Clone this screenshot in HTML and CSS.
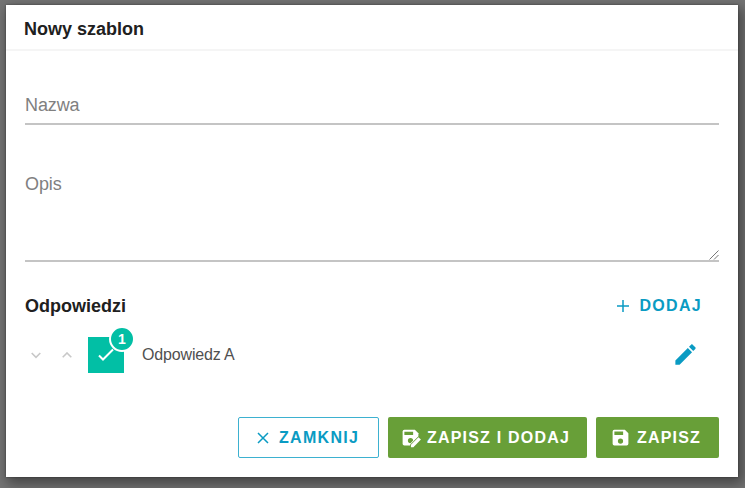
FILE: index.html
```html
<!DOCTYPE html>
<html lang="pl">
  <head>
    <title>Nowy szablon</title>
    <meta charset="utf-8" />
    <link rel="stylesheet" href="styles.css">
  </head>
  <body>
    <div class="dialog">
      <div class="header">Nowy szablon</div>
      <div class="content">
        <div class="field">
          <span class="label">Nazwa</span>
        </div>
        <div class="field area">
          <span class="label">Opis</span>
          <svg class="grip" width="10" height="10" viewBox="0 0 10 10">
            <path d="M0.5 9.5L9.5 0.5M5 9.5L9.5 5" />
          </svg>
        </div>
        <div class="section">
          <span class="title">Odpowiedzi</span>
          <a class="add">
            <svg width="12" height="12" viewBox="0 0 12 12">
              <path d="M6 0V12M0 6H12" />
            </svg>
            <span>DODAJ</span>
          </a>
        </div>
        <div class="answer">
          <svg class="arrow" width="10" height="7" viewBox="0 0 10 7">
            <path d="M0.7 1L5 5.3L9.3 1" />
          </svg>
          <svg class="arrow up" width="10" height="7" viewBox="0 0 10 7">
            <path d="M0.7 5.3L5 1L9.3 5.3" />
          </svg>
          <div class="check">
            <svg width="18" height="14" viewBox="0 0 18 14">
              <path d="M2 7.5L6 11.5L16 1.5" />
            </svg>
            <span class="badge">1</span>
          </div>
          <span class="name">Odpowiedz A</span>
          <svg class="edit" width="27" height="27" viewBox="0 0 24 24">
            <path d="M20.71 7.04c.39-.39.39-1.04 0-1.41l-2.34-2.34c-.37-.39-1.02-.39-1.41 0l-1.84 1.83 3.75 3.75M3 17.25V21h3.75L17.81 9.93l-3.75-3.75L3 17.25z" />
          </svg>
        </div>
      </div>
      <div class="actions">
        <button class="btn outlined">
          <svg class="close" width="12" height="12" viewBox="0 0 12 12">
            <path d="M1 1L11 11M11 1L1 11" />
          </svg>
          <span>ZAMKNIJ</span>
        </button>
        <button class="btn save-add">
          <svg class="save-edit" width="21" height="21" viewBox="0 0 24 24">
            <path d="M5 3h12l4 4v4.5L11.5 21H5a2 2 0 0 1-2-2V5a2 2 0 0 1 2-2z" />
            <path class="hole" d="M5 5.5h10V9H5zM12 12.5a3 3 0 1 0 0 6l3-3a3 3 0 0 0-3-3z" />
            <path class="pen" d="M12.5 23v-2.8l8.6-8.6 2.8 2.8-8.6 8.6z" />
          </svg>
          <span>ZAPISZ I DODAJ</span>
        </button>
        <button class="btn save">
          <svg class="disk" width="21" height="21" viewBox="0 0 24 24">
            <path d="M15 9H5V5h10m-3 14a3 3 0 0 1-3-3 3 3 0 0 1 3-3 3 3 0 0 1 3 3 3 3 0 0 1-3 3m5-16H5a2 2 0 0 0-2 2v14a2 2 0 0 0 2 2h14a2 2 0 0 0 2-2V7l-4-4z" />
          </svg>
          <span>ZAPISZ</span>
        </button>
      </div>
    </div>
  </body>
</html>
```

FILE: styles.css
```css
* {
  box-sizing: border-box;
}

body {
  margin: 0;
  height: 488px;
  padding: 5px 7px 11px 6px;
  overflow: hidden;
  background: #747474;
  font: 16px/20px "Liberation Sans", Arial, sans-serif;
}

.dialog {
  display: flex;
  flex-direction: column;
  height: 472px;
  background: white;
  box-shadow: 3px 5px 12px 2px rgba(0, 0, 0, 0.4), 0 0 2px rgba(0, 0, 0, 0.4);
}

.header {
  height: 46px;
  padding: 14px 18px 0;
  border-bottom: 2px solid #f5f5f5;
  color: #202020;
  font-size: 18px;
  font-weight: 700;
}

.content {
  flex: 1;
  padding: 0 19px;
}

.field {
  height: 74px;
  padding-top: 44px;
  border-bottom: 2px solid #c4c4c4;
  color: #808080;
  font-size: 18px;
}

.label {
  display: block;
  letter-spacing: -0.1px;
}

.area {
  position: relative;
  height: 137px;
  padding-top: 49px;
}

.grip {
  position: absolute;
  right: 0;
  bottom: 0;
  fill: none;
  stroke: #777;
  stroke-width: 1;
}

.section {
  display: flex;
  align-items: center;
  justify-content: space-between;
  height: 42px;
  margin-top: 23px;
  color: #202020;
}

.title {
  font-size: 18px;
  font-weight: 700;
}

.add {
  display: flex;
  align-items: center;
  gap: 10px;
  margin-right: 17px;
  color: #0a9bc3;
  font-weight: 700;
  letter-spacing: 1.3px;
}

.add svg,
.close {
  fill: none;
  stroke: #0a9bc3;
  stroke-width: 1.5;
}

.answer {
  display: flex;
  align-items: center;
  height: 56px;
  padding: 0 20px 0 6px;
}

.arrow {
  margin-right: 21px;
  fill: none;
  stroke: #c8c8c8;
  stroke-width: 1.6;
}

.up {
  margin-right: 16px;
}

.check {
  position: relative;
  width: 36px;
  height: 36px;
  padding: 11px 9px;
  background: #02bfa5;
}

.check svg {
  display: block;
  fill: none;
  stroke: white;
  stroke-width: 2;
}

.badge {
  position: absolute;
  top: -11px;
  right: -11px;
  width: 26px;
  height: 26px;
  border: 2px solid white;
  border-radius: 50%;
  background: #02bfa5;
  color: white;
  font-size: 14px;
  font-weight: 700;
  line-height: 22px;
  text-align: center;
}

.name {
  margin-left: 18px;
  color: #505050;
  letter-spacing: -0.15px;
}

.edit {
  margin: -2px 0 0 auto;
  fill: #0a9bc3;
}

.actions {
  display: flex;
  justify-content: flex-end;
  gap: 9px;
  height: 60px;
  padding: 0 19px;
}

.btn {
  display: flex;
  align-items: center;
  width: 141px;
  height: 41px;
  padding: 0 0 0 14px;
  border: 0;
  border-radius: 2px;
  background: #689f38;
  color: white;
  font: 700 16px/20px "Liberation Sans", Arial, sans-serif;
  letter-spacing: 1.2px;
  white-space: nowrap;
}

.btn svg {
  flex-shrink: 0;
}

.outlined {
  padding-left: 18px;
  border: 1px solid #3db1d0;
  background: white;
  color: #0a9bc3;
  letter-spacing: 1.3px;
}

.close {
  margin-right: 10px;
}

.save-add {
  width: 199px;
  padding-left: 12px;
}

.save {
  width: 123px;
}

.save-edit,
.disk {
  margin-right: 6px;
  fill: white;
}

.save-edit {
  overflow: visible;
}

.hole {
  fill: #689f38;
}

.pen {
  stroke: #689f38;
  stroke-width: 1.6;
  paint-order: stroke;
}
```
